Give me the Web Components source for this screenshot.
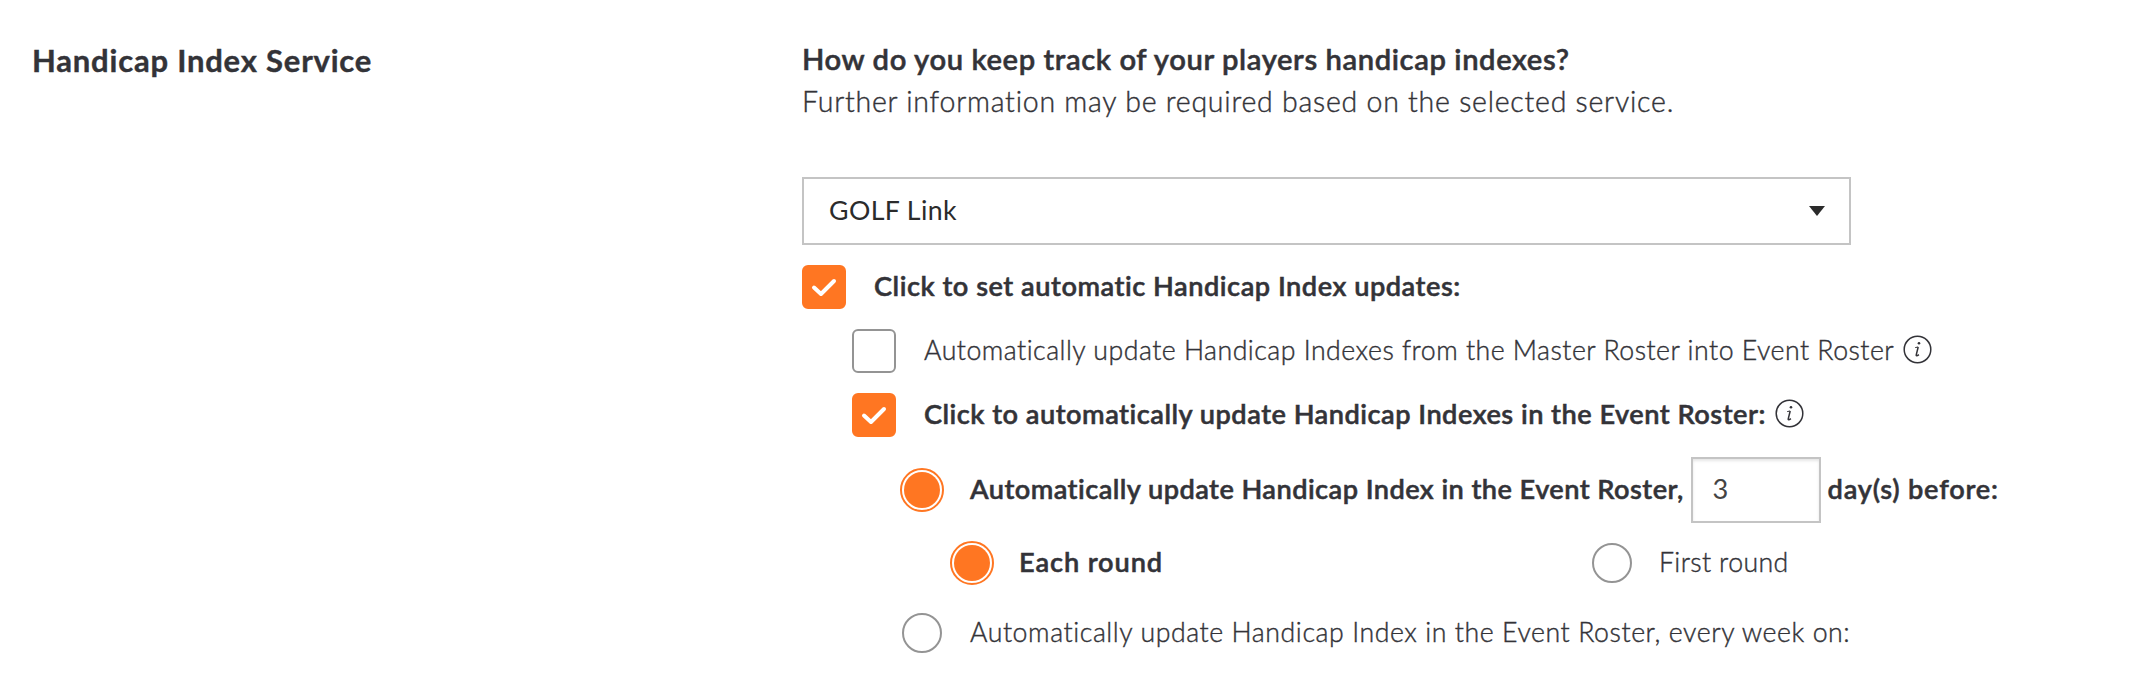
<!DOCTYPE html>
<html lang="en">
<head>
  <meta charset="utf-8">
  <title>Handicap Index Service</title>
  <style>
    body {
      margin: 0;
      color: #333338;
      background: #fff;
      font-family: Lato, "Liberation Sans", sans-serif;
    }
  </style>
</head>
<body>
  <settings-section>
    <span slot="title">Handicap Index Service</span>
    <span slot="question">How do you keep track of your players handicap indexes?</span>
    <span slot="hint">Further information may be required based on the selected service.</span>

    <select-field>GOLF Link</select-field>

    <option-list>
      <choice-option type="checkbox" checked style="--tracking: 0.513px">Click to set automatic Handicap Index updates:</choice-option>
      <option-list level="1">
        <choice-option type="checkbox" style="--tracking: 0.494px">
          Automatically update Handicap Indexes from the Master Roster into Event Roster
          <info-icon slot="after"></info-icon>
        </choice-option>
        <choice-option type="checkbox" checked style="--tracking: 0.482px">
          Click to automatically update Handicap Indexes in the Event Roster:
          <info-icon slot="after"></info-icon>
        </choice-option>
      </option-list>
      <option-list level="2">
        <choice-option type="radio" checked style="--tracking: 0.435px">
          Automatically update Handicap Index in the Event Roster,
          <days-field slot="after" value="3">day(s) before:</days-field>
        </choice-option>
        <option-list level="3">
          <choice-option type="radio" checked style="--tracking: 0.88px">Each round</choice-option>
          <choice-option type="radio" style="--tracking: 0.365px">First round</choice-option>
        </option-list>
        <choice-option type="radio" style="--tracking: 0.575px">Automatically update Handicap Index in the Event Roster, every week on:</choice-option>
      </option-list>
    </option-list>
  </settings-section>

  <script>
    class SettingsSection extends HTMLElement {
      constructor() {
        super();

        this.attachShadow({ mode: 'open' });
        this.shadowRoot.innerHTML = `
          <style>
            :host {
              display: grid;
              grid-template-columns: 770px 1fr;
              padding: 38px 0 0 32px;
              white-space: nowrap;
            }

            .title {
              padding-top: 2px;
              font-size: 31px;
              font-weight: 700;
              line-height: 40px;
              letter-spacing: 0.8px;
              -webkit-text-stroke: 0.4px;
            }

            .question,
            .hint {
              line-height: 42px;
            }
            .question {
              font-size: 29.2px;
              font-weight: 600;
              letter-spacing: 0.585px;
              -webkit-text-stroke: 0.5px;
            }
            .hint {
              font-size: 28.5px;
              font-weight: 300;
              letter-spacing: 0.76px;
              margin-bottom: 55px;
              -webkit-text-stroke: 0.4px;
            }
          </style>

          <div class="title"><slot name="title"></slot></div>
          <div class="body">
            <div class="question"><slot name="question"></slot></div>
            <div class="hint"><slot name="hint"></slot></div>
            <slot></slot>
          </div>
        `;
      }
    }

    class SelectField extends HTMLElement {
      constructor() {
        super();

        this.attachShadow({ mode: 'open' });
        this.shadowRoot.innerHTML = `
          <style>
            :host {
              box-sizing: border-box;
              width: 1049px;
              height: 68px;
              padding: 0 24px 0 25px;
              border: solid 2px #c4c4c4;
              margin-bottom: 20px;
              color: #2b2b2b;
              font-size: 26.7px;
              line-height: 60px;
              letter-spacing: 0.392px;
              display: flex;
              align-items: center;
              justify-content: space-between;
            }
            span {
              padding-bottom: 2px;
            }
            svg {
              margin-bottom: 1px;
            }
          </style>
          <span><slot></slot></span>
          <svg width="16" height="10" viewBox="0 0 16 10"><path d="M0 0h16L8 10z" fill="#2b2b2b"/></svg>
        `;
      }
    }

    class OptionList extends HTMLElement {
      constructor() {
        super();

        this.attachShadow({ mode: 'open' });
        this.shadowRoot.innerHTML = `
          <style>
            :host {
              display: flex;
              flex-direction: column;
              gap: 20px;
            }
            :host([level="1"]) {
              padding-left: 50px;
            }
            :host([level="2"]) {
              padding-left: 98px;
              gap: 0;
              --choice-gap: 26px;
            }
            :host([level="3"]) {
              display: grid;
              grid-template-columns: 640px 1fr;
              gap: 0;
              padding: 18px 0 26px 50px;
              --choice-gap: 25px;
            }
          </style>
          <slot></slot>
        `;
      }
    }

    class ChoiceOption extends HTMLElement {
      constructor() {
        super();

        this.attachShadow({ mode: 'open' });
        this.shadowRoot.innerHTML = `
          <style>
            *, *::after, *::before {
              box-sizing: border-box;
            }

            :host {
              font-size: 26.7px;
              font-weight: 300;
              line-height: 42px;
              letter-spacing: var(--tracking);
              -webkit-text-stroke: 0.4px;
              display: flex;
              align-items: center;
            }
            :host([checked]) {
              font-size: 27.2px;
              font-weight: 600;
              -webkit-text-stroke: 0.5px;
            }

            .control {
              width: 44px;
              height: 44px;
              border: solid 2px #949494;
              border-radius: 6px;
              margin-right: var(--choice-gap, 28px);
              flex: none;
              display: flex;
              align-items: center;
              justify-content: center;
            }
            :host([checked]) .control {
              border-color: #ff7622;
              background: #ff7622;
            }
            .control svg {
              display: none;
            }
            :host([type="checkbox"][checked]) svg {
              display: block;
            }

            :host([type="radio"]) .control {
              width: 40px;
              height: 40px;
              border-radius: 50%;
              margin: 2px calc(var(--choice-gap) + 2px) 2px 2px;
            }
            :host([type="radio"][checked]) .control {
              width: 44px;
              height: 44px;
              padding: 2px;
              background: #ff7622 content-box;
              margin: 0 var(--choice-gap) 0 0;
            }

            .label {
              padding-bottom: 2px;
            }
          </style>

          <span class="control">
            <svg width="40" height="40" viewBox="0 0 40 40">
              <path d="M10 20.5l7 6.5 13-13" fill="none" stroke="#fff" stroke-width="4" stroke-linecap="round" stroke-linejoin="round"/>
            </svg>
          </span>
          <span class="label"><slot></slot></span>
          <slot name="after"></slot>
        `;
      }
    }

    class InfoIcon extends HTMLElement {
      constructor() {
        super();

        this.attachShadow({ mode: 'open' });
        this.shadowRoot.innerHTML = `
          <style>
            :host {
              display: block;
              margin: -4px 0 0 9px;
            }
            svg {
              display: block;
            }
          </style>
          <svg width="29" height="29" viewBox="0 0 29 29" fill="none" stroke="#333338">
            <circle cx="14.5" cy="14.5" r="13.3" stroke-width="1.5"/>
            <circle cx="16" cy="8.2" r="1.3" fill="#333338" stroke="none"/>
            <path d="M12.2 12.6l2.9-.6" stroke-width="1"/>
            <path d="M15.2 12l-1.9 7.6c-.4 1.6.6 1.7 2.6.1" stroke-width="1.5"/>
          </svg>
        `;
      }
    }

    class DaysField extends HTMLElement {
      constructor() {
        super();

        this.attachShadow({ mode: 'open' });
        this.shadowRoot.innerHTML = `
          <style>
            :host {
              margin-left: 7px;
              letter-spacing: 0.76px;
              display: flex;
              align-items: center;
            }

            .value {
              box-sizing: border-box;
              width: 130px;
              height: 66px;
              padding: 0 20px 2px;
              border: solid 2px #c4c4c4;
              margin-right: 7px;
              color: #444;
              font-weight: 400;
              line-height: 60px;
              box-shadow: inset 0 2px 3px rgba(0, 0, 0, 0.1);
              -webkit-text-stroke: 0;
            }

            .unit {
              padding-bottom: 2px;
            }
          </style>
          <span class="value"></span>
          <span class="unit"><slot></slot></span>
        `;
      }

      connectedCallback() {
        this.shadowRoot.querySelector('.value').textContent = this.getAttribute('value');
      }
    }

    window.customElements.define('settings-section', SettingsSection);
    window.customElements.define('select-field', SelectField);
    window.customElements.define('option-list', OptionList);
    window.customElements.define('choice-option', ChoiceOption);
    window.customElements.define('info-icon', InfoIcon);
    window.customElements.define('days-field', DaysField);
  </script>
</body>
</html>
